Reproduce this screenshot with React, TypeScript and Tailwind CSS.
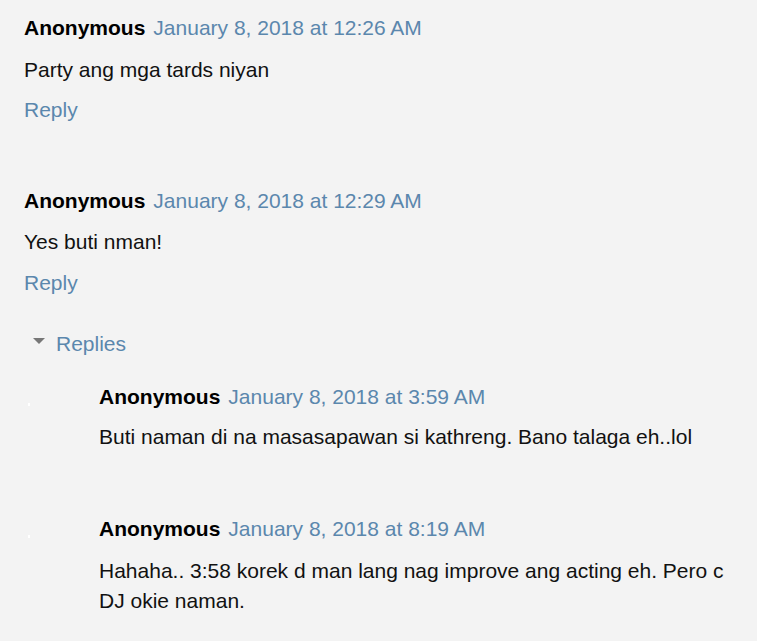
import React from "react";

const font = { fontFamily: '"Liberation Sans", Arial, sans-serif' };

function Header({ date }: { date: string }) {
  return (
    <div className="flex items-center h-6 leading-6 whitespace-nowrap">
      <span className="font-bold text-[#000]">Anonymous</span>
      <span className="ml-[8px] text-[#5b87ad]">{date}</span>
    </div>
  );
}

export default function App() {
  return (
    <div
      className="w-[757px] h-[641px] bg-[#f3f3f3] text-[21px] text-[#111] overflow-hidden"
      style={font}
    >
      <div className="pl-6 pt-4">
        {/* Comment 1 */}
        <Header date="January 8, 2018 at 12:26 AM" />
        <div className="mt-[15px] leading-[30px]">Party ang mga tards niyan</div>
        <div className="mt-[13px] h-6 leading-6 text-[#5b87ad]">Reply</div>

        {/* Comment 2 */}
        <div className="mt-[67px]">
          <Header date="January 8, 2018 at 12:29 AM" />
        </div>
        <div className="mt-[14px] leading-[30px]">Yes buti nman!</div>
        <div className="mt-[14px] h-6 leading-6 text-[#5b87ad]">Reply</div>

        {/* Replies toggle */}
        <div className="mt-[37px] h-6 flex items-center">
          <div className="ml-[9px] w-0 h-0 border-l-[6px] border-r-[6px] border-t-[6px] border-l-transparent border-r-transparent border-t-[#777] -translate-y-[3px]" />
          <span className="ml-[11px] leading-6 text-[#5b87ad]">Replies</span>
        </div>

        {/* Nested replies */}
        <div className="mt-[29px] flex">
          <div className="w-[75px] shrink-0 relative">
            <div className="absolute left-[4px] top-[18px] w-[2px] h-[3px] bg-white" />
          </div>
          <div className="w-[625px]">
            <Header date="January 8, 2018 at 3:59 AM" />
            <div className="mt-[13px] leading-[30px]">
              Buti naman di na masasapawan si kathreng. Bano talaga eh..lol
            </div>
          </div>
        </div>

        <div className="mt-[65px] flex">
          <div className="w-[75px] shrink-0 relative">
            <div className="absolute left-[4px] top-[18px] w-[2px] h-[3px] bg-white" />
          </div>
          <div className="w-[625px]">
            <Header date="January 8, 2018 at 8:19 AM" />
            <div className="mt-[15px] leading-[30px]">
              Hahaha.. 3:58 korek d man lang nag improve ang acting eh. Pero c
              DJ okie naman.
            </div>
          </div>
        </div>
      </div>
    </div>
  );
}
